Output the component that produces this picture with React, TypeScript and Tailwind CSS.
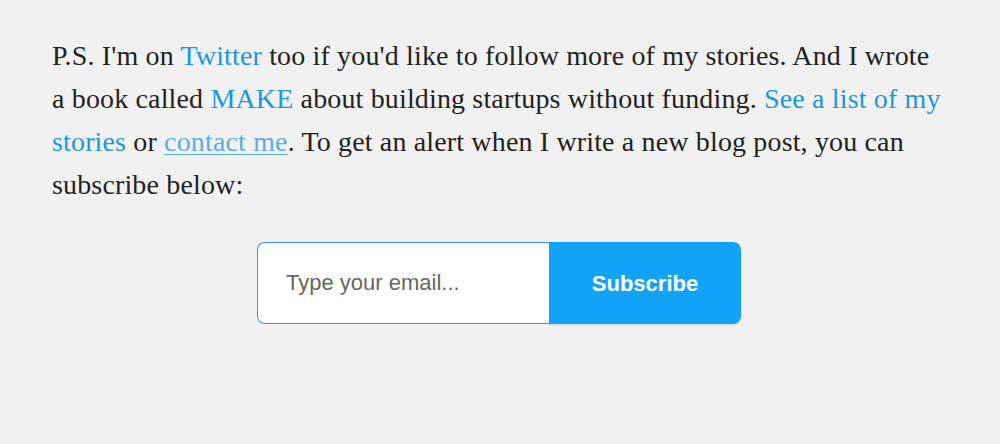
export default function App() {
  return (
    <div className="min-h-[444px] w-full bg-[#f1f1f1] pt-[34px]">
      <p className="ml-[52px] w-[920px] font-['Liberation_Serif',Georgia,serif] text-[28px] leading-[43px] tracking-[0.15px] text-[#222]">
        P.S. I'm on <a className="text-[#1b98dc]">Twitter</a> too if you'd like to follow more of my stories. And I wrote
        <br />a book called <a className="text-[#1b98dc]">MAKE</a> about building startups without funding.{" "}
        <a className="text-[#1b98dc]">See a list of my</a>
        <br />
        <a className="text-[#1b98dc]">stories</a> or{" "}
        <a className="text-[#5aaee2] underline decoration-1 underline-offset-[3px]">contact me</a>. To get an alert when I
        write a new blog post, you can
        <br />
        subscribe below:
      </p>
      <form className="mt-[36px] ml-[257px] flex h-[82px] w-[484px]" onSubmit={(e) => e.preventDefault()}>
        <input
          type="email"
          placeholder="Type your email..."
          className="h-full w-[292px] rounded-l-[8px] border-[1.5px] border-r-0 border-[#3d95d6] bg-white pl-[28px] font-['Liberation_Sans',Arial,sans-serif] text-[22px] text-[#333] placeholder:text-[#666] outline-none"
        />
        <button
          type="submit"
          className="h-full flex-1 rounded-r-[8px] bg-[#12a3f7] font-['Liberation_Sans',Arial,sans-serif] text-[22px] font-bold text-white shadow-[0_1px_2px_rgba(0,0,0,0.15)]"
        >
          Subscribe
        </button>
      </form>
    </div>
  );
}
